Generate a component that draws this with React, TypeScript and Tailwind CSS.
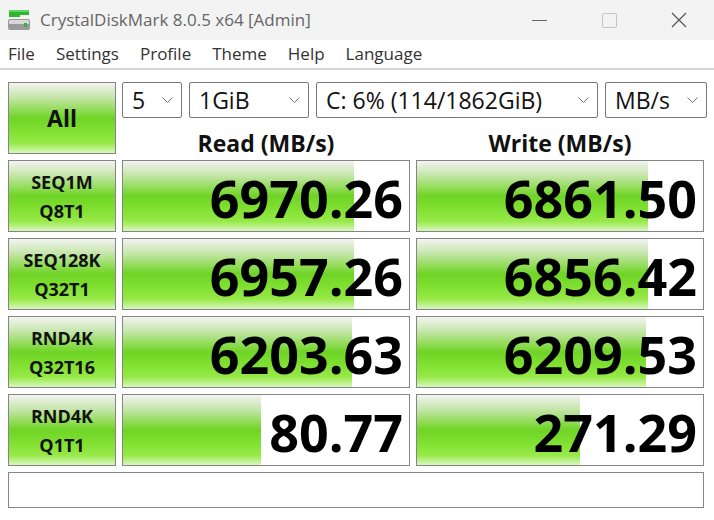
import React from 'react'

const GREEN =
  'bg-[linear-gradient(to_bottom,#f3f4f1_0%,#c6e6ad_20%,#8ddb50_40%,#6fd426_50%,#80e031_68%,#97e948_86%,#d8f7bf_100%)]'

const ROWS = [
  { l1: 'SEQ1M', l2: 'Q8T1', read: '6970.26', rp: 231, write: '6861.50', wp: 231 },
  { l1: 'SEQ128K', l2: 'Q32T1', read: '6957.26', rp: 231, write: '6856.42', wp: 231 },
  { l1: 'RND4K', l2: 'Q32T16', read: '6203.63', rp: 229, write: '6209.53', wp: 229 },
  { l1: 'RND4K', l2: 'Q1T1', read: '80.77', rp: 138, write: '271.29', wp: 163 },
]

function Chevron() {
  return (
    <svg width="11" height="6" viewBox="0 0 11 6" className="shrink-0">
      <polyline points="0.5,0.5 5.5,5.5 10.5,0.5" fill="none" stroke="#777" strokeWidth="1" />
    </svg>
  )
}

function Combo({ text, w }: { text: string; w: string }) {
  return (
    <div
      className={`${w} h-[36px] flex items-center justify-between pl-[9px] pr-[8px] border border-[#7a7a7a] rounded-[2px] bg-white text-[23px] leading-none text-[#111]`}>
      <span>{text}</span>
      <Chevron />
    </div>
  )
}

function Value({ value, px }: { value: string; px: number }) {
  return (
    <div className="relative h-[72px] border border-[#858585] bg-white overflow-hidden">
      <div className={`absolute left-0 top-0 bottom-0 ${GREEN}`} style={{ width: px }} />
      <div className="relative h-full flex items-center justify-end pr-[6px] pt-[3px] text-[52px] font-bold leading-none text-black">
        {value}
      </div>
    </div>
  )
}

function DriveIcon() {
  return (
    <svg width="24" height="24" viewBox="0 0 24 24">
      <rect x="2" y="2" width="20" height="5" fill="#2fb52f" />
      <rect x="2" y="2" width="20" height="2" fill="#5cd65c" />
      <rect x="2" y="7" width="11" height="2" fill="#2fb52f" />
      <rect x="1" y="11" width="22" height="11" rx="2" fill="#9a9a9a" />
      <rect x="2" y="12" width="20" height="4" rx="1" fill="#d8d8d8" />
      <rect x="17" y="15" width="3" height="4" fill="#34b534" />
    </svg>
  )
}

export default function App() {
  return (
    <div className="w-[714px] h-[520px] bg-white font-['Open_Sans','Noto_Sans',sans-serif] overflow-hidden">
      <div className="h-[40px] bg-[#f3f3f3] flex items-center">
        <div className="pl-[7px] pr-[9px]">
          <DriveIcon />
        </div>
        <span className="text-[17px] text-[#666]">CrystalDiskMark 8.0.5 x64 [Admin]</span>
        <div className="ml-auto flex items-center h-full">
          <div className="w-[70px] h-full flex items-center justify-center">
            <div className="w-[15px] h-px bg-[#666]" />
          </div>
          <div className="w-[70px] h-full flex items-center justify-center">
            <div className="w-[15px] h-[15px] border border-[#c4c4c4] rounded-[2px]" />
          </div>
          <div className="w-[70px] h-full flex items-center justify-center">
            <svg width="16" height="16" viewBox="0 0 16 16">
              <path d="M1 1 L15 15 M15 1 L1 15" stroke="#555" strokeWidth="1.2" />
            </svg>
          </div>
        </div>
      </div>
      <div className="h-[30px] bg-white flex items-center gap-[21px] pl-[8px] text-[17px] text-[#333] border-b-2 border-[#d4d4d4]">
        <span>File</span>
        <span>Settings</span>
        <span>Profile</span>
        <span>Theme</span>
        <span>Help</span>
        <span>Language</span>
      </div>
      <div className="pt-[12px] pl-[8px] flex flex-col gap-[6px]">
        <div className="flex gap-[6px]">
          <div
            className={`w-[108px] h-[72px] border border-[#858585] ${GREEN} flex items-center justify-center text-[23px] font-bold text-[#111]`}>
            All
          </div>
          <div className="flex flex-col">
            <div className="flex gap-[7px]">
              <Combo text="5" w="w-[60px]" />
              <Combo text="1GiB" w="w-[120px]" />
              <Combo text="C: 6% (114/1862GiB)" w="w-[282px]" />
              <Combo text="MB/s" w="w-[102px]" />
            </div>
            <div className="flex gap-[6px] h-[36px] items-end text-[23px] font-bold text-[#111] leading-none">
              <div className="w-[288px] text-center translate-y-[1px]">Read (MB/s)</div>
              <div className="w-[288px] text-center translate-y-[1px]">Write (MB/s)</div>
            </div>
          </div>
        </div>
        {ROWS.map((r, i) => (
          <div key={i} className="grid grid-cols-[108px_288px_288px] gap-[6px]">
            <div
              className={`h-[72px] border border-[#858585] ${GREEN} flex flex-col items-center justify-center gap-[11px] text-[18px] font-bold leading-none text-[#111]`}>
              <span>{r.l1}</span>
              <span>{r.l2}</span>
            </div>
            <Value value={r.read} px={r.rp} />
            <Value value={r.write} px={r.wp} />
          </div>
        ))}
        <div className="w-[696px] h-[36px] border border-[#858585] bg-white" />
      </div>
    </div>
  )
}
